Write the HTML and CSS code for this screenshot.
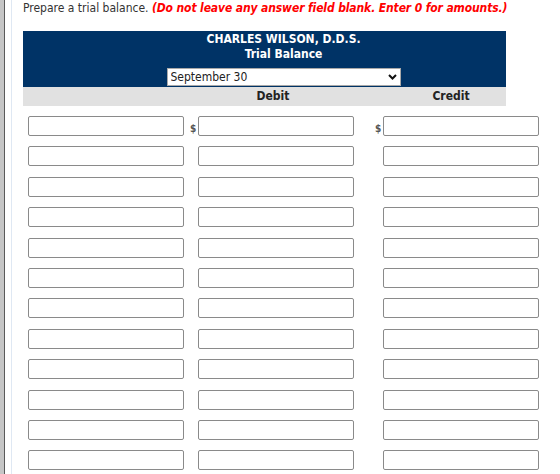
FILE: index.html
```html
<!DOCTYPE html>
<html>
<head lang="en">
    <meta charset="UTF-8">
    <title>Trial Balance</title>
    <link rel="stylesheet" href="styles.css">
</head>
<body>
<div class="frame">
    <div class="content">
        <p class="prompt">Prepare a trial balance. <em class="warn">(Do not leave any answer field blank. Enter 0 for amounts.)</em></p>

        <div class="sheet">
            <div class="head">
                <div class="title">CHARLES WILSON, D.D.S.</div>
                <div class="title">Trial Balance</div>
                <div class="date-select">
                    <select>
                        <option>September 30</option>
                    </select>
                    <svg width="9" height="6" viewBox="0 0 9 6"><polyline points="1,1 4.5,4.5 8,1" fill="none" stroke="#111" stroke-width="2"/></svg>
                </div>
            </div>
            <div class="cols">
                <span></span>
                <span class="debit">Debit</span>
                <span class="credit">Credit</span>
            </div>
        </div>

        <!-- account / debit / credit rows -->
        <div class="rows">
            <div class="row">
                <input type="text" class="acct">
                <span class="cur">$</span><input type="text">
                <span class="cur cur-cr">$</span><input type="text">
            </div>
            <div class="row"><input type="text" class="acct"><span class="cur"></span><input type="text"><span class="cur cur-cr"></span><input type="text"></div>
            <div class="row"><input type="text" class="acct"><span class="cur"></span><input type="text"><span class="cur cur-cr"></span><input type="text"></div>
            <div class="row"><input type="text" class="acct"><span class="cur"></span><input type="text"><span class="cur cur-cr"></span><input type="text"></div>
            <div class="row"><input type="text" class="acct"><span class="cur"></span><input type="text"><span class="cur cur-cr"></span><input type="text"></div>
            <div class="row"><input type="text" class="acct"><span class="cur"></span><input type="text"><span class="cur cur-cr"></span><input type="text"></div>
            <div class="row"><input type="text" class="acct"><span class="cur"></span><input type="text"><span class="cur cur-cr"></span><input type="text"></div>
            <div class="row"><input type="text" class="acct"><span class="cur"></span><input type="text"><span class="cur cur-cr"></span><input type="text"></div>
            <div class="row"><input type="text" class="acct"><span class="cur"></span><input type="text"><span class="cur cur-cr"></span><input type="text"></div>
            <div class="row"><input type="text" class="acct"><span class="cur"></span><input type="text"><span class="cur cur-cr"></span><input type="text"></div>
            <div class="row"><input type="text" class="acct"><span class="cur"></span><input type="text"><span class="cur cur-cr"></span><input type="text"></div>
            <div class="row"><input type="text" class="acct"><span class="cur"></span><input type="text"><span class="cur cur-cr"></span><input type="text"></div>
        </div>
    </div>
</div>
</body>
</html>
```

FILE: styles.css
```css
/* reset */
html,body,p,div{margin:0;padding:0}
html{overflow:hidden}
body{font:12px/15px "DejaVu Sans Condensed", "Liberation Sans", sans-serif;color:#333;background:#fff;border-left:4px solid #c6c6c6;height:474px;box-sizing:border-box}

.frame{
    border-left:1px solid #5a5a5a;
    height:100%;
}
.content{
    margin-left:6px;
    border-left:1px solid #dfe8f3;
    padding-left:11px;
    height:100%;
}
.prompt{
    padding-top:1px;
    height:30px;
}
.warn{
    color:#f00;
    font-weight:bold;
    letter-spacing:-0.12px;
}

.sheet{
    width:483px;
}
.head{
    background:#003366;
    color:#fff;
    padding:1px 0 1px 38px;
    text-align:center;
}
.title{
    font-weight:bold;
    line-height:15px;
}
.date-select{
    display:flex;
    align-items:center;
    width:232px;
    height:16px;
    margin:6px auto 0;
    background:#fff;
    border:1px solid #a9a9a9;
    text-align:left;
}
.date-select select{
    appearance:none;
    -webkit-appearance:none;
    flex:1;
    border:0;
    background:none;
    font:12px/16px "DejaVu Sans Condensed", "Liberation Sans", sans-serif;
    color:#222;
    padding:0 0 0 3px;
    height:16px;
    outline:none;
}
.date-select svg{
    margin-right:3px;
}
.cols{
    display:grid;
    grid-template-columns:165px 170px 1fr;
    background:#e1e1e1;
    height:19px;
    line-height:19px;
    font-weight:bold;
    color:#222;
    text-align:center;
}
.credit{
    padding-left:38px;
}

.rows{
    display:flex;
    flex-direction:column;
    gap:10.4px;
    padding:10px 0 0 5px;
}
.row{
    display:flex;
    align-items:flex-end;
}
.row input{
    width:156px;
    height:20px;
    box-sizing:border-box;
    border:1px solid #8a8a8a;
    border-radius:2px;
    margin:0;
    padding:0 3px;
    background:#fff;
}
.cur{
    width:8px;
    margin-left:6px;
    font-size:10px;
    line-height:14px;
    font-weight:bold;
    color:#555;
}
.cur-cr{
    margin-left:21px;
}
```
